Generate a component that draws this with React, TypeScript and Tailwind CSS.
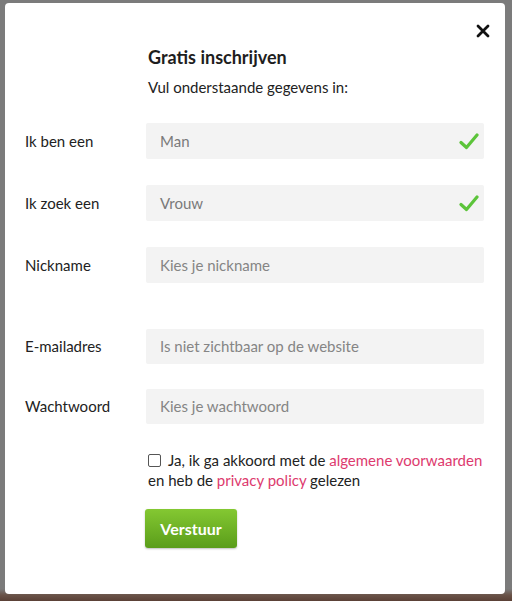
import React from 'react';

const font = { fontFamily: 'Lato, "Open Sans", sans-serif' };

const Check = () => (
  <svg className="w-[20px] h-[17px]" viewBox="0 0 20 17" fill="none">
    <path d="M2 9.5l5.5 5L18 2" stroke="#5cc43a" strokeWidth={3.2} strokeLinecap="round" strokeLinejoin="round" />
  </svg>
);

interface RowProps {
  label: string;
  text: string;
  filled?: boolean;
  className?: string;
  boxClass?: string;
}

const Row: React.FC<RowProps> = ({ label, text, filled, className = '', boxClass = 'h-[36px]' }) => (
  <div className={`flex items-center ${className}`}>
    <div className="w-[121px] text-[15px] text-[#222]">{label}</div>
    <div className={`flex-1 ${boxClass} bg-[#f3f3f3] rounded-[2px] flex items-center justify-between pl-[14px] pr-[5px]`}>
      <span className={`text-[15px] ${filled ? 'text-[#7a7a7a]' : 'text-[#858585]'}`}>{text}</span>
      {filled && <Check />}
    </div>
  </div>
);

export default function App() {
  return (
    <div
      className="w-full h-[601px] bg-[linear-gradient(180deg,#7b7b7b_0%,#7b7b7b_98%,#6a5348_99%,#5a4036_100%)] pt-[3px] pl-[5px] overflow-hidden"
      style={font}
    >
      <div className="relative w-[500px] h-[591px] bg-white rounded-[4px] pl-[20px] pr-[21px] pt-[42px]">
        <button className="absolute top-[20px] right-[14px] w-[16px] h-[16px] flex items-center justify-center">
          <svg viewBox="0 0 14 14" className="w-[14px] h-[14px]">
            <path d="M2 2l10 10M12 2L2 12" stroke="#111" strokeWidth={2.8} strokeLinecap="round" />
          </svg>
        </button>

        <div className="ml-[123px]">
          <div className="text-[18px] font-bold text-[#1e1e1e] leading-[24px]">Gratis inschrijven</div>
          <div className="text-[15px] text-[#222] leading-[20px] mt-[8px]">Vul onderstaande gegevens in:</div>
        </div>

        <Row className="mt-[26px]" label="Ik ben een" text="Man" filled />
        <Row className="mt-[26px]" label="Ik zoek een" text="Vrouw" filled />
        <Row className="mt-[26px]" label="Nickname" text="Kies je nickname" />
        <Row className="mt-[46px]" boxClass="h-[35px]" label="E-mailadres" text="Is niet zichtbaar op de website" />
        <Row className="mt-[25px]" boxClass="h-[35px]" label="Wachtwoord" text="Kies je wachtwoord" />

        <div className="ml-[123px] mt-[26px] text-[15px] leading-[20px] text-[#222]">
          <span className="inline-block align-middle w-[13px] h-[13px] border border-[#555] rounded-[2px] bg-white mr-[7px] -mt-[3px]" />
          Ja, ik ga akkoord met de <span className="text-[#dd3a6e]">algemene voorwaarden</span>
          <br />
          en heb de <span className="text-[#dd3a6e]">privacy policy</span> gelezen
        </div>

        <button className="ml-[120px] mt-[19px] w-[92px] h-[39px] rounded-[3px] bg-[linear-gradient(180deg,#84c832,#5a9d1a)] text-white text-[16px] font-bold shadow-[0_1px_2px_rgba(0,0,0,0.25)]">
          Verstuur
        </button>
      </div>
    </div>
  );
}
